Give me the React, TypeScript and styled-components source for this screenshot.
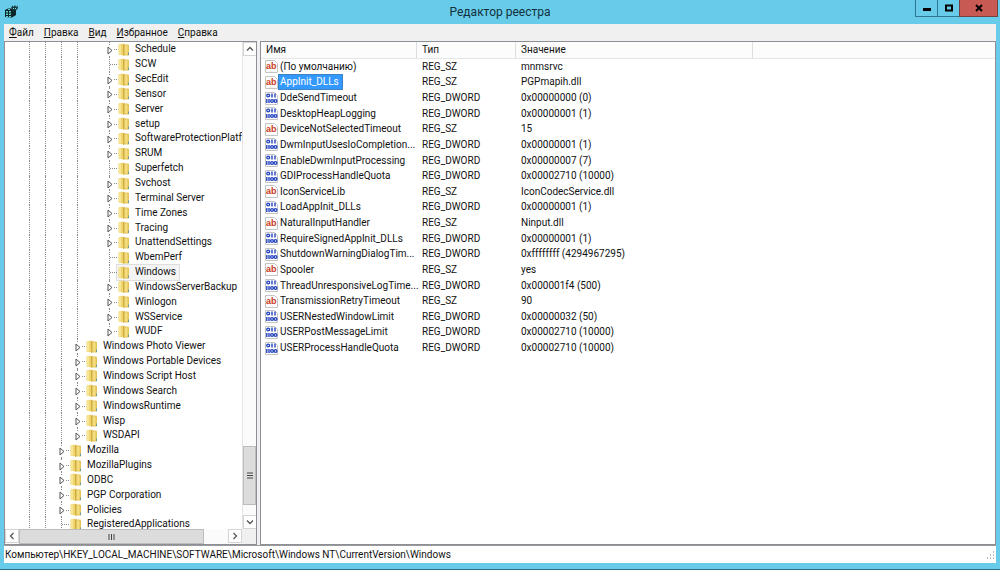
import React from 'react';
import styled, { createGlobalStyle, css } from 'styled-components';

const Global = createGlobalStyle`
  * { box-sizing: border-box; }
  html, body, #root { height: 100%; margin: 0; }
  body { font: 10px/14px Roboto, "Open Sans", sans-serif; color: #111; overflow: hidden; }
  button { font: inherit; padding: 0; margin: 0; border: 0; background: none; color: inherit; }
`;

const Window = styled.div`
  display: flex;
  flex-direction: column;
  height: 100%;
  padding: 0 4px 6px;
  background: #68cbea;
  border-bottom: 1px solid #2c6f86;
`;

const TitleBar = styled.header`
  display: grid;
  grid-template-columns: 108px 1fr 108px;
  height: 24px;
  flex: none;
`;

const Title = styled.h1`
  margin: 0;
  font-size: 12px;
  line-height: 24px;
  font-weight: 400;
  text-align: center;
  color: #12313d;
`;

const AppIcon = styled.svg`
  width: 15px;
  height: 15px;
  margin-top: 4px;
`;

const Controls = styled.div`
  display: flex;
  justify-content: flex-end;
  height: 17px;
  margin-right: -2px;
`;

const ControlButton = styled.button<{ $close?: boolean }>`
  display: flex;
  align-items: center;
  justify-content: center;
  width: ${p => (p.$close ? 39 : 23)}px;
  border: 1px solid #2f7790;
  border-top: 0;
  margin-left: -1px;
  ${p => p.$close && css`background: #c75a52; border-color: #74413f;`}
`;

const MenuBar = styled.nav`
  display: flex;
  flex: none;
  gap: 10px;
  height: 17px;
  padding-left: 5px;
  background: #f0f0f0;
`;

const MenuItem = styled.button`
  line-height: 17px;
  &::first-letter { text-decoration: underline; }
`;

const Main = styled.main`
  display: grid;
  grid-template-columns: 253px 1fr;
  gap: 3px;
  flex: 1;
  min-height: 0;
  background: #f0f0f0;
`;

const Pane = styled.section`
  min-width: 0;
  min-height: 0;
  overflow: hidden;
  background: #fff;
  border: 1px solid #8c8f96;
`;

const TreePane = styled(Pane)`
  display: grid;
  grid-template-columns: 1fr 14px;
  grid-template-rows: 1fr 15px;
`;

const Tree = styled.ul`
  display: flex;
  flex-direction: column;
  list-style: none;
  margin: 0 0 -3px;
  padding: 0 0 0 16px;
  min-width: 0;
  overflow: hidden;
`;

const TreeRow = styled.li`
  display: flex;
  flex: 1 0 0;
  min-height: 0;
  white-space: nowrap;
`;

type Guide = 'line' | 'none' | 'branch' | 'last';

const GuideCell = styled.span<{ $kind: Guide }>`
  position: relative;
  flex: none;
  width: 16px;
  &::before {
    content: "";
    position: absolute;
    left: 8px;
    top: 0;
    height: ${p => (p.$kind === 'last' ? '50%' : '100%')};
    border-left: ${p => (p.$kind === 'none' ? '0' : '1px dotted #8a8a8a')};
  }
  &::after {
    content: "";
    position: absolute;
    left: 9px;
    right: 0;
    top: 50%;
    border-top: ${p => (p.$kind === 'branch' || p.$kind === 'last' ? '1px dotted #8a8a8a' : '0')};
  }
`;

const Expander = styled.button`
  position: absolute;
  z-index: 1;
  inset: 3px 3px 1px 5px;
  display: flex;
  align-items: center;
  justify-content: center;
  background: #fff;
`;

const Node = styled.span<{ $selected?: boolean }>`
  display: flex;
  align-items: center;
  gap: 5px;
  padding: 0 3px 0 1px;
  ${p => p.$selected && css`background: #f4f4f4; box-shadow: 0 0 0 1px #dedede;`}
`;

const VScroll = styled.div`
  display: flex;
  flex-direction: column;
  border-left: 1px solid #e4e4e4;
  background: #fbfbfb;
`;

const HScroll = styled.div`
  position: relative;
  display: flex;
  background: #fbfbfb;
`;

const ScrollButton = styled.button`
  display: flex;
  align-items: center;
  justify-content: center;
  flex: none;
  width: 14px;
  height: 14px;
  border: 1px solid #d4d4d4;
  background: #fff;
`;

const Track = styled.div<{ $before: number; $vertical?: boolean }>`
  display: flex;
  flex: 1;
  flex-direction: ${p => (p.$vertical ? 'column' : 'row')};
  &::before { content: ""; flex: ${p => p.$before}; }
`;

const Thumb = styled.div<{ $size: number }>`
  display: flex;
  align-items: center;
  justify-content: center;
  flex: ${p => p.$size};
  background: #dcdcdc;
  border: 1px solid #bcbcbc;
`;

const TrackRest = styled.div<{ $size: number }>`
  flex: ${p => p.$size};
`;

const Corner = styled.div`
  background: #f0f0f0;
`;

const Values = styled.table`
  width: 100%;
  height: 314px;
  table-layout: fixed;
  border-collapse: separate;
  border-spacing: 0;
  text-align: left;
`;

const Heading = styled.th<{ $width?: number }>`
  width: ${p => (p.$width ? `${p.$width}px` : 'auto')};
  height: 17px;
  padding: 0 5px;
  font-weight: 400;
  background: #fcfcfc;
  border-bottom: 1px solid #e6e6e6;
  ${p => p.$width && css`border-right: 1px solid #dedede;`}
`;

const Cell = styled.td`
  height: 15px;
  padding: 0 5px;
  white-space: nowrap;
`;

const NameCell = styled(Cell)`
  padding: 0 0 0 4px;
`;

const NameBox = styled.div`
  display: flex;
  align-items: center;
  gap: 1px;
`;

const Name = styled.span<{ $selected?: boolean }>`
  padding: 0 1px;
  ${p => p.$selected && css`padding-right: 3px; background: #3399ff; color: #fff; box-shadow: 0 0 0 1px #3c83c8;`}
`;

const StatusBar = styled.footer`
  display: flex;
  align-items: center;
  justify-content: space-between;
  flex: none;
  height: 18px;
  padding: 1px 0 0 1px;
  background: #fff;
  border-top: 1px solid #9a9a9a;
`;

const Icon = styled.svg`
  flex: none;
  display: block;
`;

const FolderIcon = () => (
  <Icon width="12" height="13" viewBox="0 0 12 13" aria-hidden="true">
    <path d="M.5 1.500 5 .5 5.500 12.500.5 11.500Z" fill="#f0d46c" />
    <path d="M1 2 3 1.500V11.500L1 11Z" fill="#f8e698" />
    <path d="M5 1.500 6.500.5V12L5 13Z" fill="#c9a640" />
    <path d="M6 1.500h4.500l.5 1V12.500H5.500Z" fill="#e3c459" />
    <path d="M7 2.500h2.500V11.500H7Z" fill="#f4dd80" />
    <path d="M10.500 9.500v2.500" stroke="#6c9c92" strokeWidth="1" />
  </Icon>
);

const PageShape = () => (
  <path d="M.5.500h9l3 3v9H.5Z" fill="#fdfdfd" stroke="#c4c4c4" />
);

const StringIcon = () => (
  <Icon width="13" height="13" viewBox="0 0 13 13" aria-hidden="true">
    <PageShape />
    <text x="1" y="9" fontFamily="Liberation Sans" fontSize="9" fontWeight="700" fill="#cc3a1c">ab</text>
  </Icon>
);

const BinaryIcon = () => (
  <Icon width="13" height="13" viewBox="0 0 13 13" aria-hidden="true">
    <PageShape />
    <g fill="none" stroke="#2545c0" strokeWidth="1.400">
      <circle cx="3.200" cy="3.500" r="1.400" />
      <circle cx="7" cy="9" r="1.400" />
      <circle cx="10.500" cy="9" r="1.400" />
      <path d="M7 1.500V5.500M10 1.500V5.500M1.800 7V11M4 7V11" />
    </g>
  </Icon>
);

type Item = [name: string, depth: number, kind: 'closed' | 'leaf', last?: boolean];

const items: Item[] = [
  ['Schedule', 5, 'closed'], ['SCW', 5, 'leaf'], ['SecEdit', 5, 'closed'], ['Sensor', 5, 'closed'],
  ['Server', 5, 'closed'], ['setup', 5, 'closed'], ['SoftwareProtectionPlatform', 5, 'closed'],
  ['SRUM', 5, 'closed'], ['Superfetch', 5, 'leaf'], ['Svchost', 5, 'closed'],
  ['Terminal Server', 5, 'closed'], ['Time Zones', 5, 'closed'], ['Tracing', 5, 'closed'],
  ['UnattendSettings', 5, 'closed'], ['WbemPerf', 5, 'leaf'], ['Windows', 5, 'leaf'],
  ['WindowsServerBackup', 5, 'closed'], ['Winlogon', 5, 'closed'], ['WSService', 5, 'closed'],
  ['WUDF', 5, 'closed', true], ['Windows Photo Viewer', 3, 'closed'],
  ['Windows Portable Devices', 3, 'closed'], ['Windows Script Host', 3, 'closed'],
  ['Windows Search', 3, 'closed'], ['WindowsRuntime', 3, 'closed'], ['Wisp', 3, 'closed'],
  ['WSDAPI', 3, 'closed', true], ['Mozilla', 2, 'closed'], ['MozillaPlugins', 2, 'closed'],
  ['ODBC', 2, 'closed'], ['PGP Corporation', 2, 'closed'], ['Policies', 2, 'closed'],
  ['RegisteredApplications', 2, 'leaf'],
];

const values: [string, string, string][] = [
  ['(По умолчанию)', 'REG_SZ', 'mnmsrvc'],
  ['AppInit_DLLs', 'REG_SZ', 'PGPmapih.dll'],
  ['DdeSendTimeout', 'REG_DWORD', '0x00000000 (0)'],
  ['DesktopHeapLogging', 'REG_DWORD', '0x00000001 (1)'],
  ['DeviceNotSelectedTimeout', 'REG_SZ', '15'],
  ['DwmInputUsesIoCompletion...', 'REG_DWORD', '0x00000001 (1)'],
  ['EnableDwmInputProcessing', 'REG_DWORD', '0x00000007 (7)'],
  ['GDIProcessHandleQuota', 'REG_DWORD', '0x00002710 (10000)'],
  ['IconServiceLib', 'REG_SZ', 'IconCodecService.dll'],
  ['LoadAppInit_DLLs', 'REG_DWORD', '0x00000001 (1)'],
  ['NaturalInputHandler', 'REG_SZ', 'Ninput.dll'],
  ['RequireSignedAppInit_DLLs', 'REG_DWORD', '0x00000001 (1)'],
  ['ShutdownWarningDialogTim...', 'REG_DWORD', '0xffffffff (4294967295)'],
  ['Spooler', 'REG_SZ', 'yes'],
  ['ThreadUnresponsiveLogTime...', 'REG_DWORD', '0x000001f4 (500)'],
  ['TransmissionRetryTimeout', 'REG_SZ', '90'],
  ['USERNestedWindowLimit', 'REG_DWORD', '0x00000032 (50)'],
  ['USERPostMessageLimit', 'REG_DWORD', '0x00002710 (10000)'],
  ['USERProcessHandleQuota', 'REG_DWORD', '0x00002710 (10000)'],
];

const Chevron = ({ d }: { d: string }) => (
  <Icon width="8" height="8" viewBox="0 0 8 8" aria-hidden="true">
    <path d={d} fill="none" stroke="#555" strokeWidth="1.300" />
  </Icon>
);

export default function App() {
  return (
    <Window>
      <Global />
      <TitleBar>
        <AppIcon viewBox="0 0 15 15" aria-hidden="true">
          <path d="M1 6 4 4.500 7 4.500 10 6 12 5V11L8 13.500 1 13Z" fill="#0c2529" />
          <path d="M2 7h2v1.500H2ZM5 7h2v1.500H5ZM2 9.500h2V11H2ZM5 9.500h2V11H5ZM2 12h2v1H2ZM5 12h2v1H5ZM4 5h2v1H4Z" fill="#5fd0c6" />
          <path d="M7 4 8.500 1.500 9.500 3 11 1 12 3 14 1.500 13.500 5 11 7 8.500 6Z" fill="#16383c" />
          <path d="M9 4h1v1H9ZM11 4h1v1h-1Z" fill="#8ee6dc" />
        </AppIcon>
        <Title>Редактор реестра</Title>
        <Controls>
          <ControlButton aria-label="Свернуть">
            <Icon width="8" height="8" viewBox="0 0 8 8"><path d="M0 5.500h8" stroke="#000" strokeWidth="3" /></Icon>
          </ControlButton>
          <ControlButton aria-label="Развернуть">
            <Icon width="8" height="8" viewBox="0 0 8 8"><path d="M1 1.500h6v5H1Z" fill="none" stroke="#000" strokeWidth="2" /></Icon>
          </ControlButton>
          <ControlButton $close aria-label="Закрыть">
            <Icon width="8" height="8" viewBox="0 0 8 8"><path d="m1 1 6 6M7 1 1 7" stroke="#000" strokeWidth="2" /></Icon>
          </ControlButton>
        </Controls>
      </TitleBar>
      <MenuBar>
        {['Файл', 'Правка', 'Вид', 'Избранное', 'Справка'].map(m => <MenuItem key={m}>{m}</MenuItem>)}
      </MenuBar>
      <Main>
        <TreePane>
          <Tree>
            {items.map(([name, depth, kind, last]) => (
              <TreeRow key={name}>
                {Array.from({ length: depth }, (_, i) => <GuideCell key={i} $kind={i === 4 ? 'none' : 'line'} />)}
                <GuideCell $kind={last ? 'last' : 'branch'}>
                  {kind === 'closed' && (
                    <Expander aria-label={name}>
                      <Icon width="6" height="9" viewBox="0 0 6 9"><path d="M1 1v7L5 4.500Z" fill="#fff" stroke="#555" /></Icon>
                    </Expander>
                  )}
                </GuideCell>
                <Node $selected={name === 'Windows'}><FolderIcon />{name}</Node>
              </TreeRow>
            ))}
          </Tree>
          <VScroll>
            <ScrollButton aria-label="Вверх"><Chevron d="M1 5.500 4 2.500 7 5.500" /></ScrollButton>
            <Track $vertical $before={392}>
              <Thumb $size={57}><Icon width="6" height="7" viewBox="0 0 6 7"><path d="M0 1h6M0 3.500h6M0 6h6" stroke="#444" /></Icon></Thumb>
              <TrackRest $size={10} />
            </Track>
            <ScrollButton aria-label="Вниз"><Chevron d="M1 2.500 4 5.500 7 2.500" /></ScrollButton>
          </VScroll>
          <HScroll>
            <ScrollButton aria-label="Влево"><Chevron d="M5.500 1 2.500 4 5.500 7" /></ScrollButton>
            <Track $before={0}>
              <Thumb $size={185}><Icon width="7" height="6" viewBox="0 0 7 6"><path d="M1 0v6M3.500 0v6M6 0v6" stroke="#444" /></Icon></Thumb>
              <TrackRest $size={24} />
            </Track>
            <ScrollButton aria-label="Вправо"><Chevron d="M2.500 1 5.500 4 2.500 7" /></ScrollButton>
          </HScroll>
          <Corner />
        </TreePane>
        <Pane>
          <Values>
            <thead>
              <tr>
                <Heading $width={156}>Имя</Heading>
                <Heading $width={99}>Тип</Heading>
                <Heading $width={237}>Значение</Heading>
                <Heading aria-hidden="true" />
              </tr>
            </thead>
            <tbody>
              {values.map(([name, type, data]) => (
                <tr key={name}>
                  <NameCell>
                    <NameBox>
                      {type === 'REG_SZ' ? <StringIcon /> : <BinaryIcon />}
                      <Name $selected={name === 'AppInit_DLLs'}>{name}</Name>
                    </NameBox>
                  </NameCell>
                  <Cell>{type}</Cell>
                  <Cell>{data}</Cell>
                  <Cell />
                </tr>
              ))}
            </tbody>
          </Values>
        </Pane>
      </Main>
      <StatusBar>
        <span>Компьютер\HKEY_LOCAL_MACHINE\SOFTWARE\Microsoft\Windows NT\CurrentVersion\Windows</span>
        <Icon width="9" height="9" viewBox="0 0 9 9" aria-hidden="true">
          <path d="M6 1h1M3 4h1M6 4h1M0 7h1M3 7h1M6 7h1" stroke="#aaa" strokeWidth="1.500" />
        </Icon>
      </StatusBar>
    </Window>
  );
}
